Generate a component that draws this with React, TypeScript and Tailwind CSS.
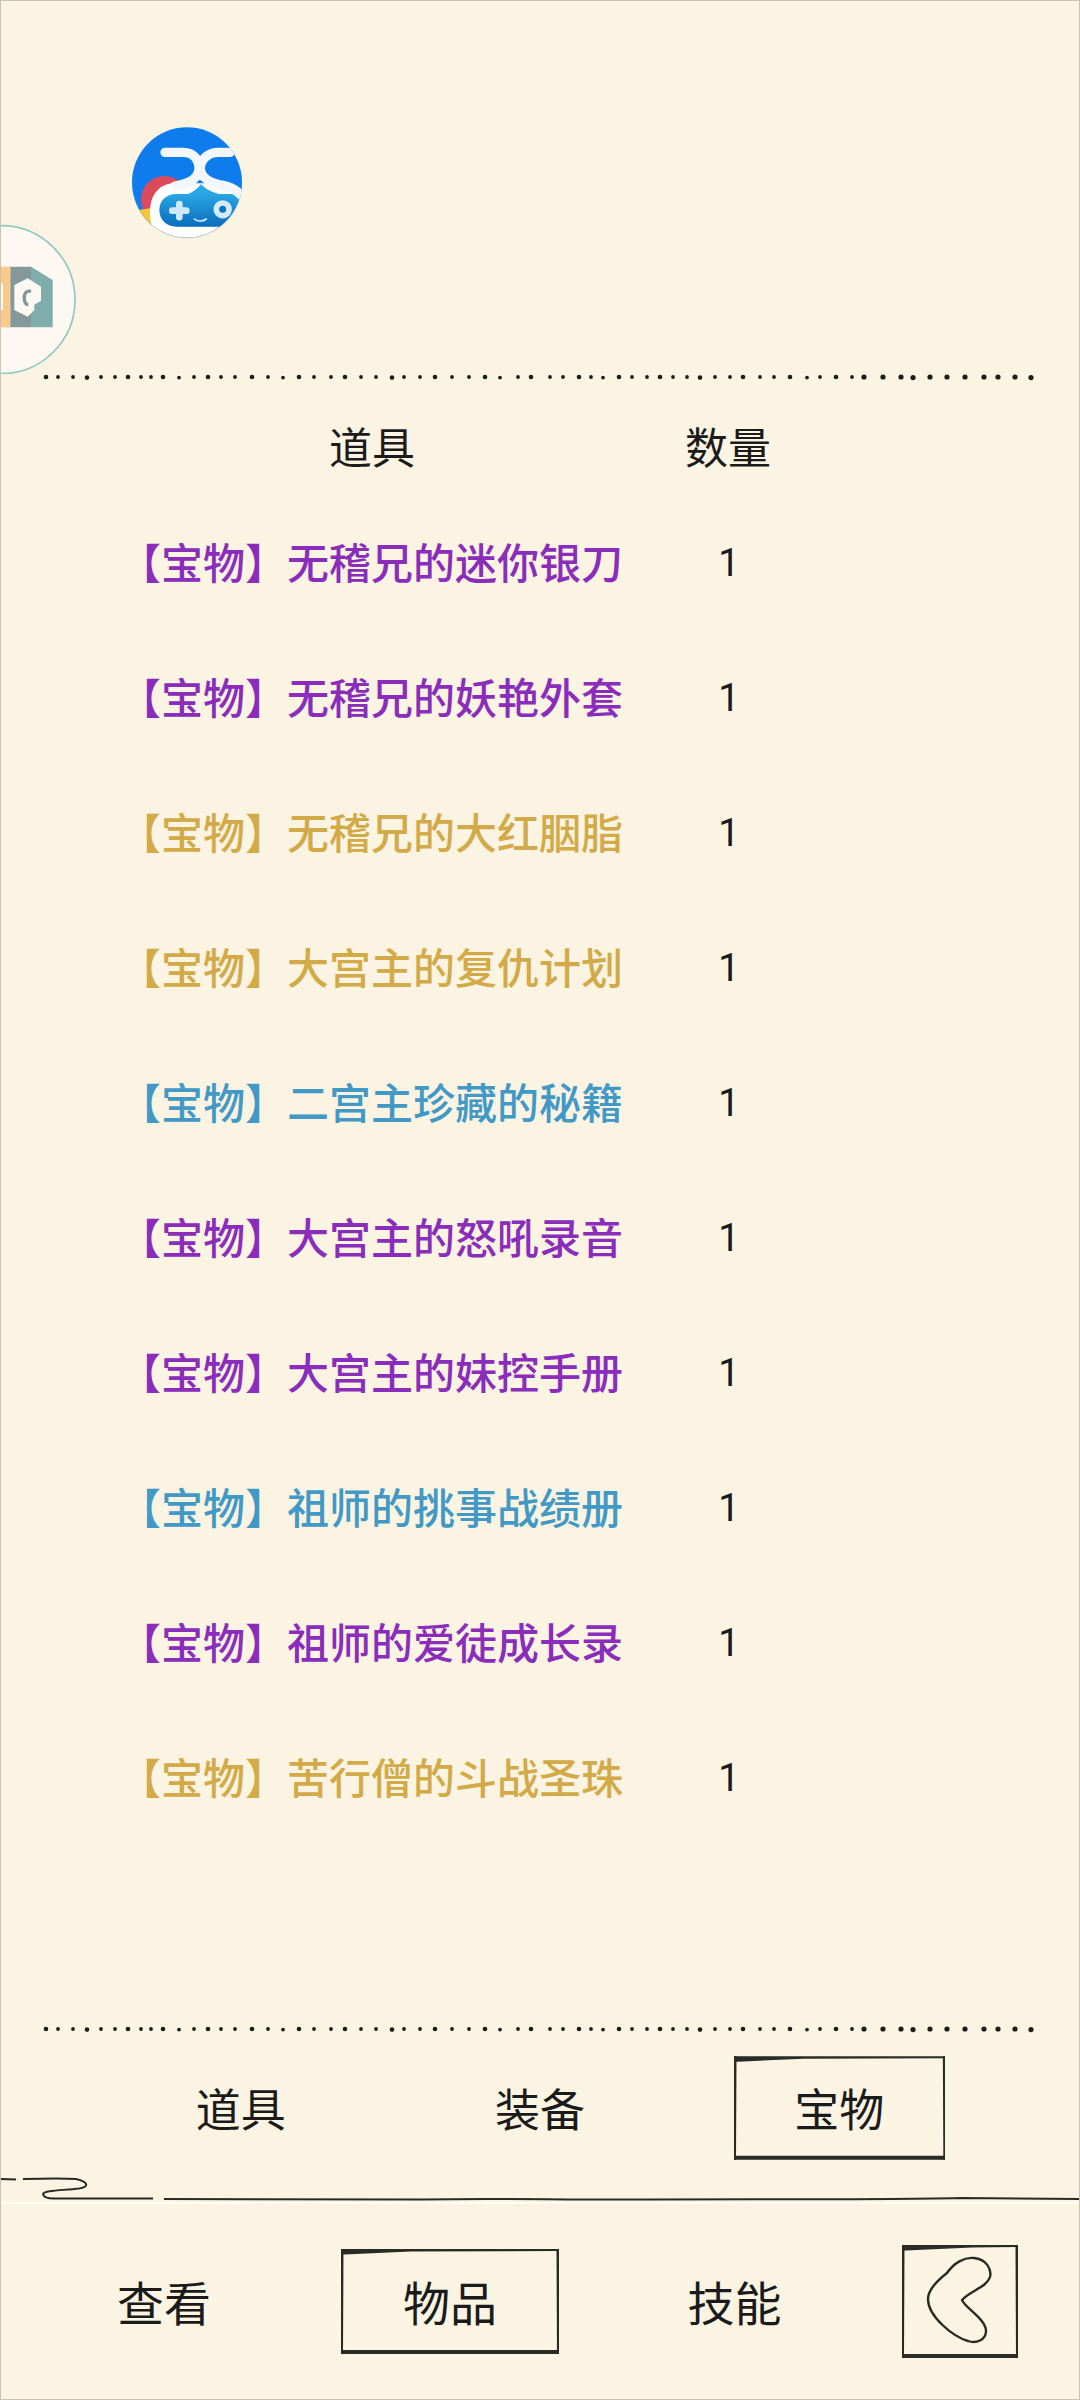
const items = [
  { name: '无稽兄的迷你银刀', color: 'text-[#8a2dbb]' },
  { name: '无稽兄的妖艳外套', color: 'text-[#8a2dbb]' },
  { name: '无稽兄的大红胭脂', color: 'text-[#d3aa48]' },
  { name: '大宫主的复仇计划', color: 'text-[#d3aa48]' },
  { name: '二宫主珍藏的秘籍', color: 'text-[#4399c6]' },
  { name: '大宫主的怒吼录音', color: 'text-[#8a2dbb]' },
  { name: '大宫主的妹控手册', color: 'text-[#8a2dbb]' },
  { name: '祖师的挑事战绩册', color: 'text-[#4399c6]' },
  { name: '祖师的爱徒成长录', color: 'text-[#8a2dbb]' },
  { name: '苦行僧的斗战圣珠', color: 'text-[#d3aa48]' },
]

// dots of the hand drawn divider, read off the reference
const dots = [
  45, 57, 72, 86, 100, 114, 127, 140, 150, 162, 178, 193, 207, 220, 234, 251, 267, 282, 298, 313, 330, 344, 360,
  375, 391, 403, 419, 434, 451, 468, 484, 499, 517, 530, 549, 562, 578, 590, 602, 618, 631, 646, 659, 672, 686,
  699, 714, 729, 742, 759, 773, 789, 806, 819, 835, 851, 863, 882, 900, 912, 929, 946, 964, 983, 997, 1014, 1030,
]

function DottedLine() {
  return (
    <svg width="1080" height="14" viewBox="0 0 1080 14" className="block shrink-0">
      {dots.map((x, i) => (
        <circle key={x} cx={x} cy={i % 7 === 3 ? 7.6 : 7} r={x > 860 ? 2.6 : i % 3 === 0 ? 2.3 : 1.9} fill="#1c1c1c" />
      ))}
    </svg>
  )
}

function SketchFrame({ w, h }: { w: number; h: number }) {
  return (
    <svg viewBox={`0 0 ${w} ${h}`} className="absolute inset-0 h-full w-full" fill="#2a2a26">
      <path d={`M0 0 L${w} 0 L${w} 2 L70 2.5 L4 5.5 L0 5.5 Z`} />
      <path d={`M0 0 L2.5 0 L2 ${h} L0 ${h} Z`} />
      <path d={`M${w - 2.5} 0 L${w} 0 L${w} ${h} L${w - 2} ${h} Z`} />
      <path d={`M0 ${h - 4} L${w} ${h - 4} L${w} ${h} L0 ${h} Z`} />
    </svg>
  )
}

function AppLogo() {
  return (
    <svg width="125" height="125" viewBox="0 0 375 375" className="block">
      <defs>
        <clipPath id="logoClip">
          <circle cx="186" cy="187" r="165" />
        </clipPath>
        <linearGradient id="padFill" x1="0" y1="0" x2="0" y2="1">
          <stop offset="0" stopColor="#2aa6e4" />
          <stop offset="1" stopColor="#0a6cbd" />
        </linearGradient>
      </defs>
      <circle cx="186" cy="190" r="165" fill="#d9d3c4" />
      <g clipPath="url(#logoClip)">
        <rect x="0" y="0" width="375" height="375" fill="#0f7cee" />
        <circle cx="118" cy="238" r="70" fill="#dc4b5c" />
        <path d="M40 270 L95 262 L110 345 L60 345 Z" fill="#f4c63c" />
        <path d="M75 278 C75 222 105 190 150 190 L290 190 C320 195 345 215 380 240 L380 375 L118 375 C90 345 75 315 75 278 Z" fill="#fff" />
        <path d="M103 270 C103 240 125 222 155 222 L360 222 L360 320 L155 320 C125 320 103 300 103 270 Z" fill="url(#padFill)" />
        <path d="M185 224 C205 216 220 204 228 192 C240 206 262 218 290 224 Z" fill="#2aa6e4" />
        <path
          d="M120 97 L175 97 C205 97 222 118 222 145 C222 172 200 190 150 198"
          fill="none"
          stroke="#f1f7fd"
          strokeWidth="28"
          strokeLinecap="round"
        />
        <path
          d="M315 97 L280 97 C250 97 226 118 226 145 C226 172 255 190 295 196 C320 200 340 215 355 232"
          fill="none"
          stroke="#f1f7fd"
          strokeWidth="28"
          strokeLinecap="round"
        />
        <path d="M163 252 L163 292 M142 272 L184 272" stroke="#cfe9fb" strokeWidth="20" strokeLinecap="round" />
        <circle cx="293" cy="268" r="19" fill="#0d74c4" stroke="#d4ecfb" strokeWidth="17" />
        <path d="M208 297 C216 305 234 305 244 297" fill="none" stroke="#d4ecfb" strokeWidth="5" strokeLinecap="round" />
      </g>
    </svg>
  )
}

function FloatBall() {
  return (
    <svg width="75" height="150" viewBox="0 370 225 450" className="absolute left-0 top-[223px]">
      <circle cx="0" cy="597" r="222" fill="#fdf9f2" stroke="#93c6c1" strokeWidth="5" />
      <rect x="0" y="498" width="28" height="182" fill="#fbc98a" />
      <rect x="0" y="548" width="6" height="80" fill="#fdf9f2" />
      <path d="M28 498 L90 498 L90 680 L28 680 Z" fill="#86999a" />
      <path d="M90 498 L155 538 L155 680 L90 680 Z" fill="#7fadab" />
      <path d="M80 533 L120 558 L120 600 L100 612 L100 628 L80 648 L40 628 L40 553 Z" fill="#fdf9f2" />
      <path d="M90 572 C72 568 68 585 70 596 C72 608 78 612 82 612" fill="none" stroke="#7f9a9a" strokeWidth="10" />
    </svg>
  )
}

function Tab({ label, active }: { label: string; active?: boolean }) {
  return (
    <div className="relative flex h-[104px] items-center justify-center">
      {active && <SketchFrame w={212} h={104} />}
      {label}
    </div>
  )
}

export default function App() {
  return (
    <div className="relative flex h-[2400px] w-[1080px] flex-col overflow-hidden border border-[#c9c3b4] bg-[#fbf4e3] font-['Noto_Sans_CJK_SC',sans-serif] text-[#1b1b1b]">
      <FloatBall />

      <div className="h-[369px] shrink-0 pl-[124px] pt-[119px]">
        <AppLogo />
      </div>
      <DottedLine />

      <div className="flex h-[112px] shrink-0 items-center pt-[10px] text-[43px]">
        <div className="w-[668px] pl-[74px] text-center">道具</div>
        <div className="w-[118px] text-center">数量</div>
      </div>

      {items.map((item) => (
        <div key={item.name} className="flex h-[135px] shrink-0 items-center">
          <div className={`ml-[72px] w-[598px] pb-[6px] pr-[2px] text-center text-[42px] font-medium ${item.color}`}>
            【宝物】{item.name}
          </div>
          <div className="w-[116px] text-center font-['Roboto',sans-serif] text-[38px]">1</div>
        </div>
      ))}

      <div className="mt-auto shrink-0">
        <DottedLine />
        <div className="grid h-[140px] grid-cols-3 px-[90px] pt-[20px] text-[45px]">
          <Tab label="道具" />
          <Tab label="装备" />
          <div className="px-[44px]">
            <Tab label="宝物" active />
          </div>
        </div>
        <svg width="1080" height="28" viewBox="0 0 1080 28" className="block">
          <rect x="0" y="26" width="1080" height="2" fill="#fffdf6" />
          <path
            d="M0 3 L15 3.5 M22 3 C40 2.5 62 2 75 3 C88 6 88 11 78 12.5 C62 14.5 44 14 42 18 C43 22 48 23 56 22.5 L152 22.5 M163 23 L420 23.5 C500 22 560 24 640 23.5 C760 23 860 24 960 22 L1080 23"
            fill="none"
            stroke="#2a2924"
            strokeWidth="2"
          />
        </svg>
        <div className="flex h-[195px] items-center text-[47px]">
          <div className="ml-[116px] w-[224px]">查看</div>
          <div className="relative flex h-[105px] w-[218px] items-center justify-center">
            <SketchFrame w={218} h={105} />
            物品
          </div>
          <div className="w-[343px] pl-[8px] text-center">技能</div>
          <div className="relative h-[113px] w-[116px]">
            <SketchFrame w={116} h={113} />
            <svg viewBox="0 0 116 113" className="absolute inset-0 h-full w-full">
              <path
                d="M45 28 C52 18 62 12 72 13 C84 14 90 24 88 32 C85 42 68 46 60 55 C62 62 84 74 84 86 C84 95 74 99 66 96 C52 92 26 72 26 54 C26 44 36 35 45 28 Z"
                fill="none"
                stroke="#2a2924"
                strokeWidth="2.4"
              />
            </svg>
          </div>
        </div>
      </div>
    </div>
  )
}
